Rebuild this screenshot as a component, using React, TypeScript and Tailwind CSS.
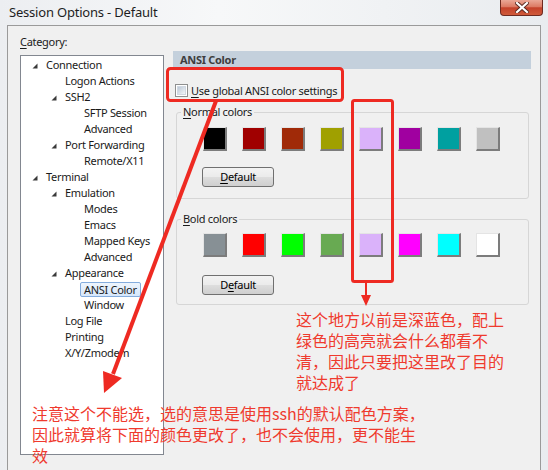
import React from 'react';

type Node = { label: string; level: 0 | 1 | 2; exp?: boolean; sel?: boolean };

const TREE: Node[] = [
  { label: 'Connection', level: 0, exp: true },
  { label: 'Logon Actions', level: 1 },
  { label: 'SSH2', level: 1, exp: true },
  { label: 'SFTP Session', level: 2 },
  { label: 'Advanced', level: 2 },
  { label: 'Port Forwarding', level: 1, exp: true },
  { label: 'Remote/X11', level: 2 },
  { label: 'Terminal', level: 0, exp: true },
  { label: 'Emulation', level: 1, exp: true },
  { label: 'Modes', level: 2 },
  { label: 'Emacs', level: 2 },
  { label: 'Mapped Keys', level: 2 },
  { label: 'Advanced', level: 2 },
  { label: 'Appearance', level: 1, exp: true },
  { label: 'ANSI Color', level: 2, sel: true },
  { label: 'Window', level: 2 },
  { label: 'Log File', level: 1 },
  { label: 'Printing', level: 1 },
  { label: 'X/Y/Zmodem', level: 1 },
];

const INDENT = ['pl-[11px]', 'pl-[30px]', 'pl-[49px]'];

const NORMAL = ['#000000', '#a00000', '#a02a08', '#a0a000', '#dab2fa', '#a000a0', '#00a0a0', '#c0c0c0'];
const BOLD = ['#879095', '#ff0000', '#00ff00', '#68aa52', '#dab2fa', '#ff00ff', '#00ffff', '#ffffff'];

// 树节点展开的小三角
const Glyph = () => (
  <svg width="6" height="6" viewBox="0 0 6 6" className="mt-[2px]">
    <polygon points="5.5,0.5 5.5,5.5 0.5,5.5" fill="#3a3a3a" />
  </svg>
);

const Swatches = ({ colors }: { colors: string[] }) => (
  <div className="flex gap-[15px] pl-[26px]">
    {colors.map((c, i) => (
      <div
        key={i}
        className="w-[24px] h-[24px] border-t border-l border-r-2 border-b-2 border-t-[#e4e4e4] border-l-[#e4e4e4] border-r-[#7c7c7c] border-b-[#7c7c7c]"
        style={{ backgroundColor: c }}
      />
    ))}
  </div>
);

const DefaultButton = ({ under }: { under: number }) => {
  const text = 'Default';
  return (
    <div className="ml-[25px] w-[72px] h-[20px] rounded-[3px] border border-[#707070] bg-[linear-gradient(#f3f3f3_0%,#ebebeb_48%,#dddddd_52%,#cfcfcf_100%)] flex items-center justify-center text-[11px] text-black">
      {text.split('').map((ch, i) => (
        <span key={i} className={i === under ? 'underline underline-offset-2' : ''}>
          {ch}
        </span>
      ))}
    </div>
  );
};

export default function App() {
  return (
    <div className="relative w-[548px] h-[470px] overflow-hidden bg-[linear-gradient(90deg,#eceef1,#f7f8f9_40%,#e9ecef)] font-['Noto_Sans',sans-serif] text-[11px] tracking-[-0.3px] text-[#1a1a1a]">
      {/* 标题栏 */}
      <div className="h-[25px] flex items-start">
        <div className="pl-[9px] pt-[3px] text-[13px] leading-[18px] tracking-[-0.2px] text-[#1e1e1e]">
          Session Options - Default
        </div>
        <div className="ml-auto mr-[5px] w-[43px] h-[16px] rounded-b-[4px] border border-t-0 border-[#6e2a20] bg-[linear-gradient(#eaa796_0%,#dc7a64_45%,#c4412a_52%,#cf5a3a_100%)] flex items-center justify-center">
          <svg width="14" height="11" viewBox="0 0 14 11">
            <path d="M2 1 L12 10 M12 1 L2 10" stroke="#5a2a22" strokeWidth="4" strokeLinecap="square" />
            <path d="M2 1 L12 10 M12 1 L2 10" stroke="#ffffff" strokeWidth="2.2" strokeLinecap="square" />
          </svg>
        </div>
      </div>

      {/* 窗口主体 */}
      <div className="ml-[7px] w-[534px] h-[445px] border-t border-l border-r border-[#9a9a9a] bg-[#f0f0f0] pt-[9px] pl-[12px] flex">
        <div className="flex flex-col">
          <div className="h-[14px] leading-[14px]">
            <span className="underline underline-offset-2">C</span>ategory:
          </div>
          <div className="mt-[6px] w-[144px] h-[400px] border border-[#828790] bg-white pt-[1px]">
            {TREE.map((n, i) => (
              <div key={i} className={`flex items-center h-[16px] leading-[16px] ${INDENT[n.level]}`}>
                <div className="w-[14px] flex items-center">{n.exp && <Glyph />}</div>
                {n.sel ? (
                  <span className="ml-[-4px] px-[3px] h-[15px] leading-[13px] rounded-[2px] border border-[#84acdd] bg-[linear-gradient(#eef5fd,#d6e7fb)]">
                    {n.label}
                  </span>
                ) : (
                  <span>{n.label}</span>
                )}
              </div>
            ))}
          </div>
        </div>

        <div className="ml-[9px] mt-[16px] w-[358px] flex flex-col">
          <div className="h-[18px] leading-[18px] bg-[#c4d0dc] pl-[7px] font-bold text-[#3e3e3e]">ANSI Color</div>

          <div className="mt-[15px] ml-[2px] flex items-center h-[13px]">
            <div className="w-[13px] h-[13px] border border-[#8e8f8f] bg-white p-[1px]">
              <div className="w-full h-full bg-[linear-gradient(135deg,#bcc8d6,#f2f5f8)] border border-[#d0d8e2]" />
            </div>
            <span className="ml-[3px] leading-[13px]">
              <span className="underline underline-offset-2">U</span>se global ANSI color settings
            </span>
          </div>

          <div className="mt-[15px] ml-[3px] mr-[2px] border border-[#d6d6d6] rounded-[3px] pb-[11px]">
            <div className="-mt-[8px] ml-[4px] w-fit px-[2px] bg-[#f0f0f0] leading-[14px]">
              <span className="underline underline-offset-2">N</span>ormal colors
            </div>
            <div className="mt-[8px]">
              <Swatches colors={NORMAL} />
            </div>
            <div className="mt-[16px]">
              <DefaultButton under={0} />
            </div>
          </div>

          <div className="mt-[20px] ml-[3px] mr-[2px] border border-[#d6d6d6] rounded-[3px] pb-[9px]">
            <div className="-mt-[8px] ml-[4px] w-fit px-[2px] bg-[#f0f0f0] leading-[14px]">
              <span className="underline underline-offset-2">B</span>old colors
            </div>
            <div className="mt-[7px]">
              <Swatches colors={BOLD} />
            </div>
            <div className="mt-[18px]">
              <DefaultButton under={1} />
            </div>
          </div>
        </div>
      </div>

      {/* 红色标注 */}
      <svg className="absolute left-0 top-0 pointer-events-none" width="548" height="470" viewBox="0 0 548 470">
        <rect x="167.5" y="68.5" width="175" height="32" rx="3" fill="none" stroke="#ee2a22" strokeWidth="3" />
        <rect x="352.5" y="100.5" width="40" height="181" rx="2" fill="none" stroke="#ee2a22" strokeWidth="3" />
        <line x1="366" y1="282" x2="366" y2="297" stroke="#ee2a22" strokeWidth="2" />
        <polygon points="361,295 371,295 366,306" fill="#ee2a22" />
        <line x1="216" y1="101" x2="113" y2="374" stroke="#ee2a22" strokeWidth="4" />
        <polygon points="104,393 103,371 122,378" fill="#ee2a22" />
      </svg>

      <div className="absolute left-[296px] top-[309px] text-[16px] leading-[21px] tracking-normal text-[#ef3a2e] font-['Noto_Sans_CJK_SC',sans-serif] whitespace-nowrap">
        这个地方以前是深蓝色，配上
        <br />
        绿色的高亮就会什么都看不
        <br />
        清，因此只要把这里改了目的
        <br />
        就达成了
      </div>

      <div className="absolute left-[32px] top-[403px] text-[16px] leading-[21px] tracking-normal text-[#ef3a2e] font-['Noto_Sans_CJK_SC',sans-serif] whitespace-nowrap">
        注意这个不能选，选的意思是使用ssh的默认配色方案，
        <br />
        因此就算将下面的颜色更改了，也不会使用，更不能生
        <br />
        效
      </div>
    </div>
  );
}
